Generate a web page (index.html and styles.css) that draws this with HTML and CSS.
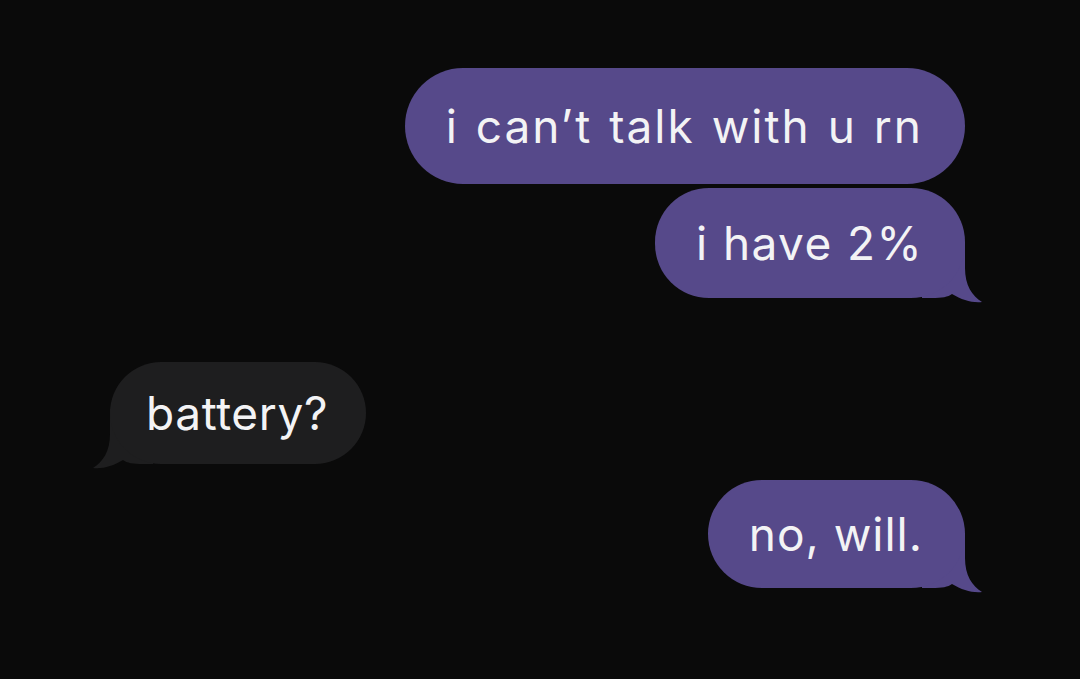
FILE: index.html
```html
<!DOCTYPE html>
<html>
<head>
<meta charset="utf-8">
<link rel="stylesheet" href="styles.css">
</head>
<body>
<div class="chat">
  <div class="bubble out b1">i can’t talk with u rn</div>
  <div class="bubble out b2">i have 2%
    <svg class="tail tail-r" width="60" height="60" viewBox="0 0 60 60"><path d="M0 0 L43 0 L43 25 C43 42 50 53 60 59 C50 60 40 57 30 51 C26 54 20 55 10 55 L0 55 Z"/></svg>
  </div>
  <div class="bubble in b3">battery?
    <svg class="tail tail-l" width="60" height="60" viewBox="0 0 60 60"><path d="M0 0 L43 0 L43 25 C43 42 50 53 60 59 C50 60 40 57 30 51 C26 54 20 55 10 55 L0 55 Z"/></svg>
  </div>
  <div class="bubble out b4">no, will.
    <svg class="tail tail-r" width="60" height="60" viewBox="0 0 60 60"><path d="M0 0 L43 0 L43 25 C43 42 50 53 60 59 C50 60 40 57 30 51 C26 54 20 55 10 55 L0 55 Z"/></svg>
  </div>
</div>
</body>
</html>
```

FILE: styles.css
```css
html, body {
  margin: 0;
  padding: 0;
  background: #0a0a0a;
  width: 1080px;
  height: 679px;
  overflow: hidden;
}

.chat {
  position: relative;
  z-index: 0;
  display: flex;
  flex-direction: column;
  padding: 68px 115px 0 110px;
  font-family: Inter, "Liberation Sans", Arial, sans-serif;
  font-size: 46px;
  letter-spacing: 1.4px;
  color: #f3f3f5;
}

.bubble {
  position: relative;
  display: flex;
  align-items: center;
  padding: 0 42px 0 41px;
  box-sizing: border-box;
  border-radius: 54px;
  white-space: nowrap;
}

.out {
  align-self: flex-end;
  background: #56498a;
}

.in {
  align-self: flex-start;
  background: #1e1e1f;
}

.b1 {
  height: 116px;
  border-radius: 58px;
  letter-spacing: 2px;
  word-spacing: 2px;
}

.b2 {
  height: 110px;
  margin-top: 4px;
}

.b3 {
  height: 102px;
  margin-top: 64px;
  padding: 0 38px 0 36px;
  letter-spacing: 0.6px;
}

.b4 {
  height: 108px;
  margin-top: 16px;
  letter-spacing: 1px;
}

.tail {
  position: absolute;
  bottom: -5px;
  z-index: -1;
}

.tail-r {
  right: -17px;
  fill: #56498a;
}

.tail-l {
  left: -17px;
  fill: #1e1e1f;
  transform: scaleX(-1);
}
```
